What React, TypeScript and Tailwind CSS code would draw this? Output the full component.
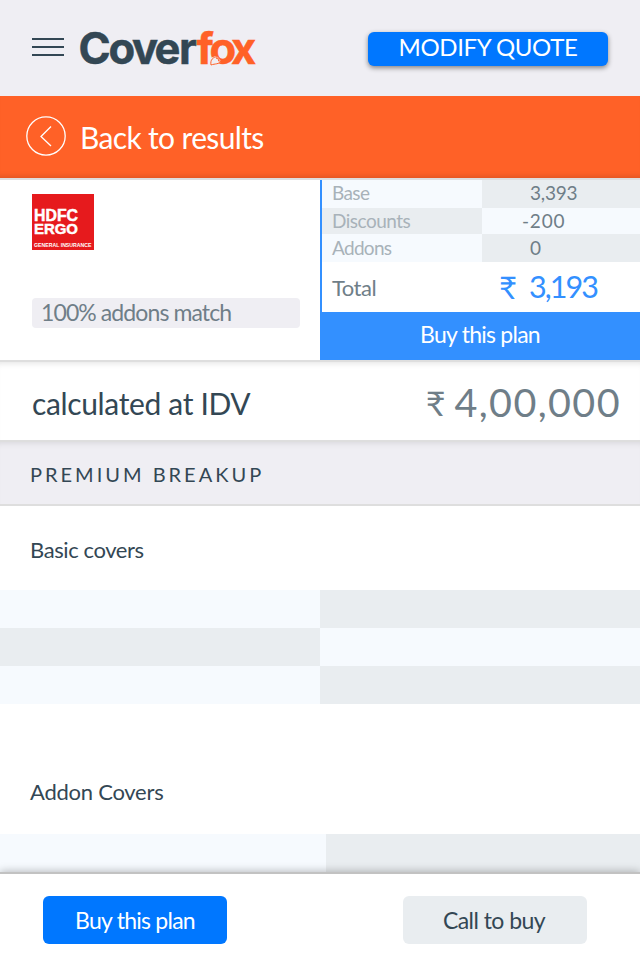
import React from "react";

const rows = [
  { label: "Base", value: "3,393", h: "h-7", light: true, pad: "pl-12", labelTrack: "tracking-[-0.6px]", valueTrack: "tracking-[-0.2px]", leading: "leading-[26px]" },
  { label: "Discounts", value: "-200", h: "h-[26px]", light: false, pad: "pl-10", labelTrack: "tracking-[-0.5px]", valueTrack: "tracking-[0.8px]", leading: "leading-[26px]" },
  { label: "Addons", value: "0", h: "h-7", light: true, pad: "pl-12", labelTrack: "tracking-[-0.7px]", valueTrack: "tracking-normal", leading: "leading-[27px]" },
];

function Logo() {
  return (
    <svg width="190" height="56" viewBox="0 0 190 56" className="ml-[14px] block overflow-visible" aria-label="Coverfox">
      <g fontFamily="Inter, sans-serif" fontWeight="700">
        <text x="0.500 30.500 54 76.500 101" y="43.500" fontSize="43.500" fill="#334754" stroke="#334754" strokeWidth="0.500">Cover</text>
        <text x="118.500 131.500 153" y="43.500" fontSize="43.500" fill="#ff6127" stroke="#ff6127" strokeWidth="0.500">fox</text>
      </g>
      <path d="M131 47 C130 40 133 36.500 139 36 L143 41 C141 46 136 45 131 47Z" fill="#efeef3" />
      <path d="M133 45 C132 40 135 37 139.500 36.500 L138.500 38.500 L141 39 L140.500 41 L143 41 C141 44.500 137 43.500 133 45Z" fill="#efeef3" stroke="#ff6127" strokeWidth="1" />
    </svg>
  );
}

export default function App() {
  return (
    <div className="flex h-[960px] w-[640px] flex-col overflow-hidden bg-white font-[Lato,sans-serif] text-[#334754]">
      <header className="flex h-24 shrink-0 items-start bg-[#efeef3] pl-8">
        <div className="mt-[38px] flex w-8 flex-col gap-[6px]">
          <i className="h-[2px] bg-[#334754]" />
          <i className="h-[2px] bg-[#334754]" />
          <i className="h-[2px] bg-[#334754]" />
        </div>
        <div className="mt-5">
          <Logo />
        </div>
        <button className="mt-8 ml-auto mr-8 h-[34px] w-60 rounded-[6px] bg-[#0077ff] pb-[4px] text-[24px] leading-[30px] tracking-[-0.4px] whitespace-nowrap text-white shadow-[0_2px_5px_rgba(0,0,0,0.45)]">
          MODIFY QUOTE
        </button>
      </header>

      <div className="flex h-[82px] shrink-0 items-center bg-[#ff6127] pl-[26px] shadow-[inset_0_-6px_5px_-4px_rgba(0,0,0,0.12)]">
        <svg width="40" height="40" viewBox="0 0 40 40" fill="none" stroke="#fff" strokeWidth="1.300" className="-mt-[2px]">
          <circle cx="20" cy="20" r="19.200" />
          <path d="M25 10.500 15 20.500 25 30" />
        </svg>
        <span className="ml-[14px] text-[30px] leading-[40px] tracking-[-0.65px] whitespace-nowrap text-white">Back to results</span>
      </div>

      <section className="flex h-[184px] shrink-0 border-y-2 border-[#dedede]">
        <div className="flex w-80 flex-col pl-8">
          <div className="mt-[14px] h-14 w-[62px] bg-[#e61a1d]">
            <svg width="62" height="56" viewBox="0 0 62 56" className="block overflow-visible" fill="#fff" fontFamily="Liberation Sans, Arial, sans-serif" fontWeight="700">
              <text x="2" y="27.300" fontSize="16.500" textLength="44" lengthAdjust="spacingAndGlyphs" stroke="#fff" strokeWidth="0.500">HDFC</text>
              <text x="2" y="40" fontSize="15.500" textLength="44" lengthAdjust="spacingAndGlyphs" stroke="#fff" strokeWidth="0.500">ERGO</text>
              <text x="2" y="53.300" fontSize="5.800" textLength="57.500" lengthAdjust="spacingAndGlyphs">GENERAL INSURANCE</text>
            </svg>
          </div>
          <div className="mt-12 h-[30px] w-[268px] rounded-[4px] bg-[#efeef3] pl-[9px] text-[23px] leading-[28px] tracking-[-0.9px] whitespace-nowrap text-[#6f7e88]">
            100% addons match
          </div>
        </div>
        <div className="flex w-80 flex-col border-l-2 border-[#3390ff]">
          {rows.map((r) => (
            <div key={r.label} className={`flex ${r.h} text-[19px] ${r.leading}`}>
              <div className={`w-40 pl-[10px] text-[#a8b2b9] ${r.labelTrack} ${r.light ? "bg-[#f6fafe]" : "bg-[#e9edf0]"}`}>{r.label}</div>
              <div className={`flex-1 text-[#6f7e88] ${r.pad} ${r.valueTrack} ${r.light ? "bg-[#e9edf0]" : "bg-[#f6fafe]"}`}>{r.value}</div>
            </div>
          ))}
          <div className="flex h-[50px] items-center pl-[10px]">
            <span className="w-[167px] text-[22px] tracking-[-0.5px] text-[#6f7e88]">Total</span>
            <span className="text-[31px] leading-[48px] text-[#3390ff]">₹</span>
            <span className="ml-[12px] pb-[2px] text-[30.5px] leading-[48px] tracking-[-1.9px] text-[#3390ff]">3,193</span>
          </div>
          <button className="h-12 bg-[#3390ff] pr-[2px] pb-[4px] text-[23px] leading-[44px] tracking-[-0.75px] text-white">Buy this plan</button>
        </div>
      </section>

      <section className="flex h-[78px] shrink-0 items-center justify-between pr-[19px] pl-8 shadow-[inset_0_6px_6px_-5px_rgba(0,0,0,0.12)]">
        <span className="pt-[3px] text-[30px] leading-[40px] tracking-[-0.35px] whitespace-nowrap">calculated at IDV</span>
        <span className="flex items-center text-[#6f7e88]">
          <span className="pt-[2px] text-[34px]">₹</span>
          <span className="ml-[9px] pt-[1px] text-[39.5px] leading-[40px] tracking-[1.4px]">4,00,000</span>
        </span>
      </section>

      <h2 className="h-[66px] shrink-0 border-y-2 border-[#dedede] bg-[#efeef3] pl-[30px] text-[20px] leading-[64px] tracking-[3px] whitespace-nowrap shadow-[inset_0_6px_6px_-5px_rgba(0,0,0,0.1)]">
        PREMIUM BREAKUP
      </h2>

      <h3 className="h-[84px] shrink-0 pl-[30px] text-[22px] leading-[88px] tracking-[-0.4px]">Basic covers</h3>
      <div className="grid shrink-0 grid-cols-2 grid-rows-[38px_38px_38px]">
        <i className="bg-[#f6fafe]" />
        <i className="bg-[#e9edf0]" />
        <i className="bg-[#e9edf0]" />
        <i className="bg-[#f6fafe]" />
        <i className="bg-[#f6fafe]" />
        <i className="bg-[#e9edf0]" />
      </div>

      <h3 className="mt-[46px] h-[84px] shrink-0 pl-[30px] text-[22px] leading-[84px] tracking-[-0.25px]">Addon Covers</h3>
      <div className="flex h-[38px] shrink-0">
        <i className="w-[326px] bg-[#f6fafe]" />
        <i className="flex-1 bg-[#e9edf0]" />
      </div>

      <footer className="relative flex h-[88px] shrink-0 items-start justify-between border-t-2 border-[#c2c2c2] bg-white pt-[22px] pr-[53px] pl-[43px] shadow-[0_-1px_8px_rgba(0,0,0,0.25)]">
        <button className="h-12 w-[184px] rounded-[6px] bg-[#0077ff] text-[23px] leading-[48px] tracking-[-0.75px] text-white">Buy this plan</button>
        <button className="h-12 w-[184px] rounded-[6px] bg-[#e9edf0] pr-[2px] text-[23px] leading-[48px] tracking-[-0.55px]">Call to buy</button>
      </footer>
    </div>
  );
}
